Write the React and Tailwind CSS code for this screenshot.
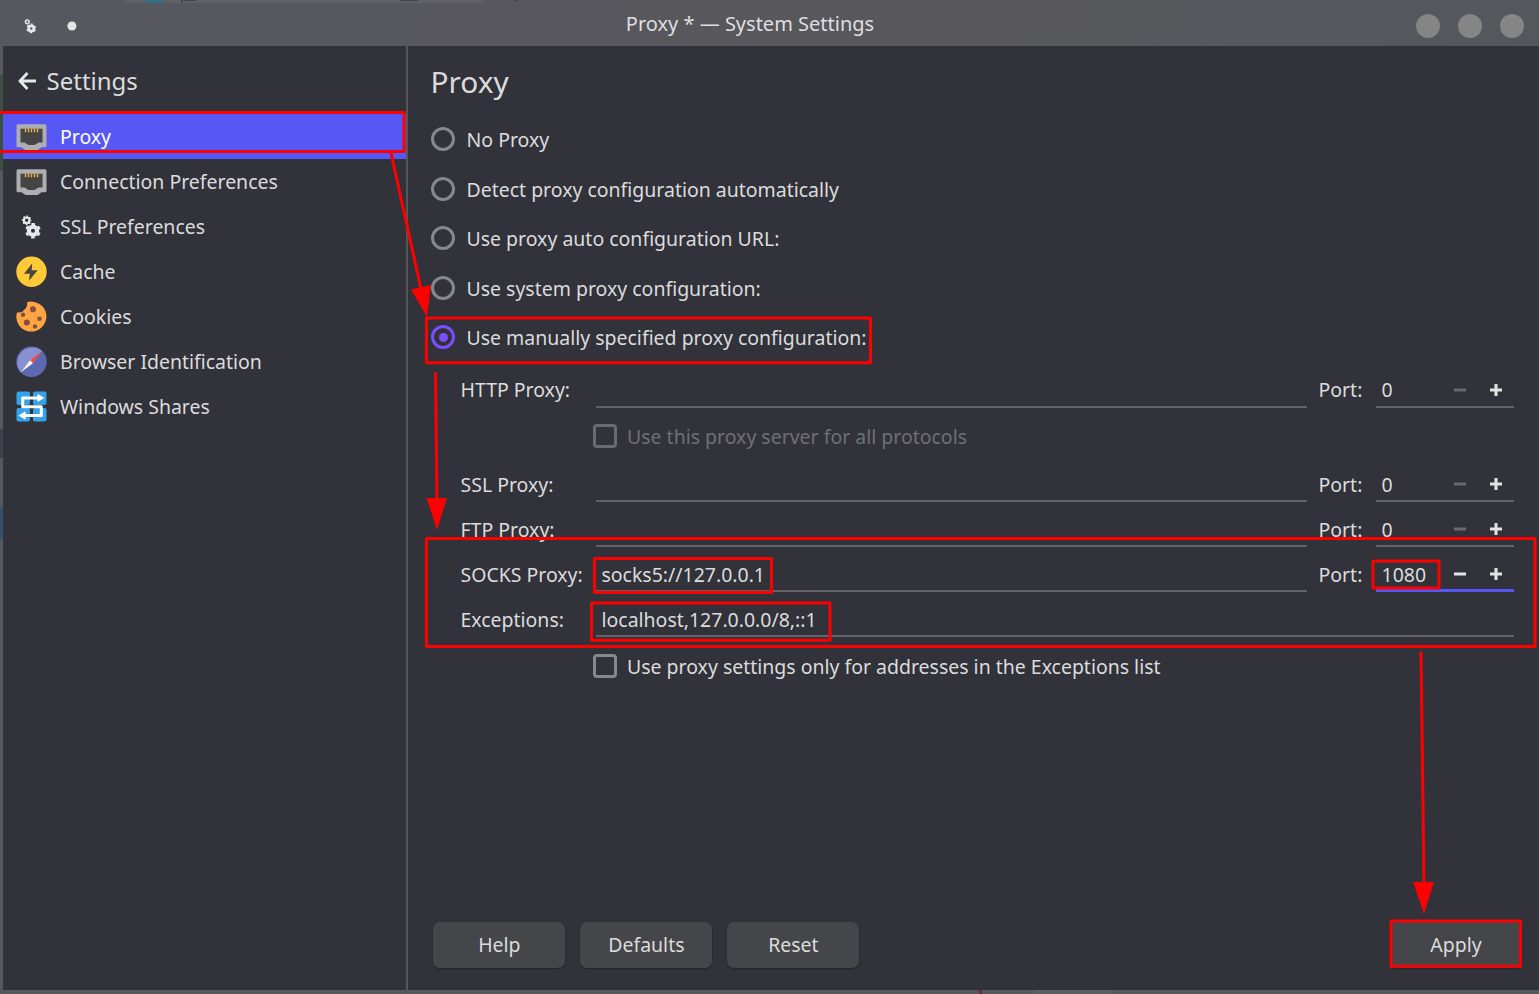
import React from "react";

const Ethernet = () => (
  <svg width="32" height="32" viewBox="-0.5 0 32 32">
    <path d="M2.500 3.200h27a1.500 1.500 0 0 1 1.500 1.500v20a1.500 1.500 0 0 1-1.500 1.500h-3.500l-4 2.800h-12l-4-2.800H2.500A1.500 1.500 0 0 1 1 24.700V4.700a1.500 1.500 0 0 1 1.500-1.500z" fill="#aeaeb0" />
    <path d="M5 7.700h22v13.800h-4l-4 2.500h-6l-4-2.500H5z" fill="#454545" />
    <path d="M10 7.700v3.500M13 7.700v3.500M16 7.700v3.500M19 7.700v3.500M22 7.700v3.500" stroke="#f0b440" strokeWidth="1.400" />
  </svg>
);

const Gears = ({ size = 32 }) => (
  <svg width={size} height={size} viewBox="0 0 32 32" fill="none" stroke="#e8e8e8">
    <circle cx="11.700" cy="9.300" r="2.800" strokeWidth="2.200" />
    <circle cx="11.700" cy="9.300" r="4.100" strokeWidth="1.500" strokeDasharray="1.610 1.610" strokeDashoffset="0.805" />
    <circle cx="18" cy="19.800" r="4.100" strokeWidth="4.200" />
    <circle cx="18" cy="19.800" r="6.800" strokeWidth="2" strokeDasharray="3.560 3.560" strokeDashoffset="-1.780" />
  </svg>
);

const Bolt = () => (
  <svg width="32" height="32" viewBox="-0.5 0 32 32">
    <circle cx="16" cy="15.700" r="15.200" fill="#ffca35" />
    <path d="M16.800 7.200 8.500 17.700h5.800l-.800 7 8.700-10.500h-6z" fill="#474740" />
  </svg>
);

const Cookie = () => (
  <svg width="32" height="32" viewBox="-0.5 0.3 32 32">
    <path d="M11.500 1.500c2-.7 5-1 8 0 6 1.500 10 5.500 11 11 .7 2 .5 5-.2 7-1.500 5.500-5.500 9.500-11 11-2.500.6-5.500.500-8-.3C6 28.500 2.500 24.500 1.300 19.500.6 16.500.7 14 1.700 11.500c3 .800 6-.5 7-2.500 2-1 3.500-4.500 2.800-7.500z" fill="#ffa544" />
    <g fill="#85503f">
      <circle cx="17.500" cy="8.500" r="3" />
      <circle cx="7.500" cy="14" r="2.200" />
      <circle cx="11.300" cy="21.700" r="3" />
      <circle cx="24" cy="18" r="2.300" />
      <circle cx="19.500" cy="25.700" r="2.200" />
    </g>
  </svg>
);

const Compass = () => (
  <svg width="32" height="32" viewBox="-0.5 0.3 32 32">
    <circle cx="16" cy="16" r="15.200" fill="#5c68b0" />
    <path d="M5.300 26.700A15.200 15.200 0 0 1 26.700 5.300z" fill="#8791cf" />
    <path d="m26.500 5.500-12 9 3 3z" fill="#f24c45" />
    <path d="m5.500 26.500 9-12 3 3z" fill="#f4f4f8" />
  </svg>
);

const Shares = () => (
  <svg width="32" height="32" viewBox="-0.5 0 32 32">
    <g fill="#35a3e8">
      <rect x="1" y="0.500" width="13.500" height="13.500" rx="2" />
      <rect x="17.500" y="0.500" width="13.500" height="13.500" rx="2" />
      <rect x="1" y="17" width="13.500" height="13.500" rx="2" />
      <rect x="17.500" y="17" width="13.500" height="13.500" rx="2" />
    </g>
    <path d="M23 6.900H7.200v8.800h18.600v8.800H9" fill="none" stroke="#fff" strokeWidth="3" strokeLinejoin="round" />
    <path d="m22 2.700 7 4.200-7 4.200zM10 20.300l-7 4.200 7 4.200z" fill="#fff" />
  </svg>
);

const navItems = [
  { label: "Proxy", Icon: Ethernet, active: true },
  { label: "Connection Preferences", Icon: Ethernet },
  { label: "SSL Preferences", Icon: Gears },
  { label: "Cache", Icon: Bolt },
  { label: "Cookies", Icon: Cookie },
  { label: "Browser Identification", Icon: Compass },
  { label: "Windows Shares", Icon: Shares },
];

const modes = [
  "No Proxy",
  "Detect proxy configuration automatically",
  "Use proxy auto configuration URL:",
  "Use system proxy configuration:",
  "Use manually specified proxy configuration:",
];

function TitleBar() {
  return (
    <header className="relative grid h-[46px] shrink-0 grid-cols-[1fr_auto_1fr] items-center bg-linear-to-r from-[#57575f] via-[#57575c] to-[#56575c]">
      <svg className="absolute top-0 left-0" width="520" height="4" viewBox="0 0 520 4">
        <path d="M124 0h360v3H124z" fill="#606164" />
        <path d="M144 0h20q-2 3-6 3h-8q-4 0-6-3z" fill="#2f6f88" />
        <path d="M181 0h2v2h-2zM184 0h12v1h-12zM400 0h18v1h-18zM515 0h3v1h-3z" fill="#434449" />
      </svg>
      <div className="flex items-center pt-1.5 pl-5">
        <Gears size={20} />
        <svg className="ml-[27px]" width="10" height="10" viewBox="0 0 10 10">
          <circle cx="4.900" cy="5" r="4.500" fill="#e4e4e4" />
        </svg>
      </div>
      <h1 className="-translate-x-[19.500px] pt-px text-[20px] leading-[44px] text-[#dfdfe0]">Proxy * — System Settings</h1>
      <div className="flex justify-end gap-[18px] pt-1.5 pr-[15px]">
        <span className="size-6 rounded-full bg-[#858586]" />
        <span className="size-6 rounded-full bg-[#858586]" />
        <span className="size-6 rounded-full bg-[#858586]" />
      </div>
    </header>
  );
}

function Sidebar() {
  return (
    <aside className="w-[405px] shrink-0 border-r-2 border-[#55565b]">
      <div className="flex h-[68px] items-center pl-[15px]">
        <svg className="mt-0.5" width="19" height="18" viewBox="0 0 19 18" fill="none" stroke="#e8e8e8" strokeWidth="2.800">
          <path d="M9.500 1 2 9l7.500 8M2 9h16" />
        </svg>
        <span className="ml-[9.500px] pt-0.5 text-[24px] leading-none">Settings</span>
      </div>
      <nav>
        {navItems.map(({ label, Icon, active }) => (
          <div key={label} className={`flex h-[45px] items-center gap-[13px] pl-3 ${active ? "bg-[#5757f5] text-white" : ""}`}>
            <Icon />
            <span>{label}</span>
          </div>
        ))}
      </nav>
    </aside>
  );
}

function PortInput({ value, focused, pad }) {
  return (
    <div className={`flex h-[45px] w-[138px] items-center pl-[5.500px] ${focused ? "border-b-3 border-[#5757f5]" : "border-b-2 border-[#626367] "}`}>
      <span className={`flex-1 ${focused ? "pt-[13px]" : pad}`}>{value}</span>
      <svg className={focused ? "mt-[12px]" : "mt-[11px]"} width="60" height="12" viewBox="0 0 60 12" fill="none" strokeWidth="3">
        <path d="M0 6h12" stroke={focused ? "#e4e4e4" : "#68696d"} />
        <path d="M36 6h12M42 0v12" stroke="#e4e4e4" />
      </svg>
    </div>
  );
}

function ProxyRow({ label, value, port, focused, first }) {
  const labelPad = first ? "pt-2" : "pt-[10px]";
  return (
    <div className="flex h-[45px] items-center">
      <span className={`w-[135.500px] ${labelPad}`}>{label}</span>
      <div className="flex h-[45px] w-[711px] items-center border-b-2 border-[#626367] pt-[12px] pl-[5.500px]">{value}</div>
      <span className={`ml-[11.500px] w-[57.500px] ${labelPad}`}>Port:</span>
      <PortInput value={port} focused={focused} pad={first ? "pt-[10px]" : "pt-[12px]"} />
    </div>
  );
}

function CheckRow({ label, disabled }) {
  return (
    <label className={`flex items-center gap-[10px] pl-[132.500px] ${disabled ? "text-[#6f7074]" : ""}`}>
      <span className={`size-6 rounded-[4px] border-3 ${disabled ? "border-[#6a6b6f]" : "border-[#87888b]"}`} />
      <span className="translate-y-px leading-6">{label}</span>
    </label>
  );
}

function Button({ children }) {
  return (
    <button className="h-[46px] w-[132px] rounded-[7px] bg-[#45464a] shadow-[0_1px_2px_rgba(0,0,0,0.3)]">{children}</button>
  );
}

function Annotations() {
  return (
    <svg className="pointer-events-none absolute inset-0" width="1539" height="994" viewBox="0 0 1539 994">
      <g fill="none" stroke="#ff0000" strokeWidth="3" strokeLinejoin="round">
        <rect x="-4" y="112.500" width="408" height="39" />
        <rect x="426.500" y="318" width="444" height="44.800" />
        <rect x="426.500" y="538.500" width="1108.500" height="108" />
        <rect x="594.500" y="558.500" width="177" height="34" />
        <rect x="591.500" y="603" width="238.500" height="37.300" />
        <rect x="1373" y="561" width="66" height="27" />
        <rect x="1391" y="921" width="129.500" height="45.300" />
        <path d="M391 153 421 289M435.500 372 437 500M1421 651.500 1424 884" />
      </g>
      <g fill="#ff0000">
        <path d="m411 289.500 20-4.500-4 32zM426.500 498h20.500l-10 32zM1413 882h21l-10 32z" />
      </g>
    </svg>
  );
}

export default function App() {
  return (
    <div className="relative flex h-[994px] w-[1539px] flex-col overflow-hidden bg-[#57585d] font-['Noto_Sans',sans-serif] text-[19.480px] text-[#dcdcdd]">
      <TitleBar />
      <div className="flex h-[944px] shrink-0">
        <div className="flex w-[3px] shrink-0 flex-col">
          <span className="mt-[29px] h-[96px] bg-[#3c4f40]" />
          <span className="mt-[258px] h-[29px] bg-[#3f4049]" />
          <span className="mt-[49px] h-[32px] bg-[#35506a]" />
        </div>
        <div className="flex flex-1 bg-[#31323a]">
          <Sidebar />
          <main className="flex flex-1 flex-col pr-[17px] pl-[22.500px]">
            <h2 className="mt-[16px] h-[40px] text-[29.800px] leading-[39px]">Proxy</h2>
            <div className="mt-[12.500px] ml-[0.500px]">
              {modes.map((mode, i) => (
                <label key={mode} className="flex h-[49.500px] items-center gap-[11.500px]">
                  <span className={`flex size-6 items-center justify-center rounded-full border-3 ${i === 4 ? "border-[#7c4dff]" : "border-[#87888b]"}`}>
                    {i === 4 && <span className="size-[9px] rounded-full bg-[#7c4dff]" />}
                  </span>
                  <span className={i % 2 === 0 ? "" : "translate-y-[0.500px]"}>{mode}</span>
                </label>
              ))}
            </div>
            <div className="mt-px ml-[30px]">
              <ProxyRow label="HTTP Proxy:" port="0" first />
              <div className="h-[49px] pt-4">
                <CheckRow label="Use this proxy server for all protocols" disabled />
              </div>
              <ProxyRow label="SSL Proxy:" port="0" />
              <ProxyRow label="FTP Proxy:" port="0" />
              <ProxyRow label="SOCKS Proxy:" value="socks5://127.0.0.1" port="1080" focused />
              <div className="flex h-[45px] items-center">
                <span className="w-[135.500px] pt-[10px]">Exceptions:</span>
                <div className="flex h-[45px] w-[918px] items-center border-b-2 border-[#626367] pt-[12px] pl-[5.500px]">localhost,127.0.0.0/8,::1</div>
              </div>
              <div className="pt-[17px]">
                <CheckRow label="Use proxy settings only for addresses in the Exceptions list" />
              </div>
            </div>
            <div className="mt-auto mb-[22px] ml-[2.900px] flex gap-[15px]">
              <Button>Help</Button>
              <Button>Defaults</Button>
              <Button>Reset</Button>
              <div className="ml-auto">
                <Button>Apply</Button>
              </div>
            </div>
          </main>
        </div>
      </div>
      <div className="flex h-1">
        <span className="ml-[979px] w-[3px] bg-[#62303a]" />
        <span className="ml-[52px] w-[78px] bg-[#5c5d61]" />
      </div>
      <Annotations />
    </div>
  );
}
